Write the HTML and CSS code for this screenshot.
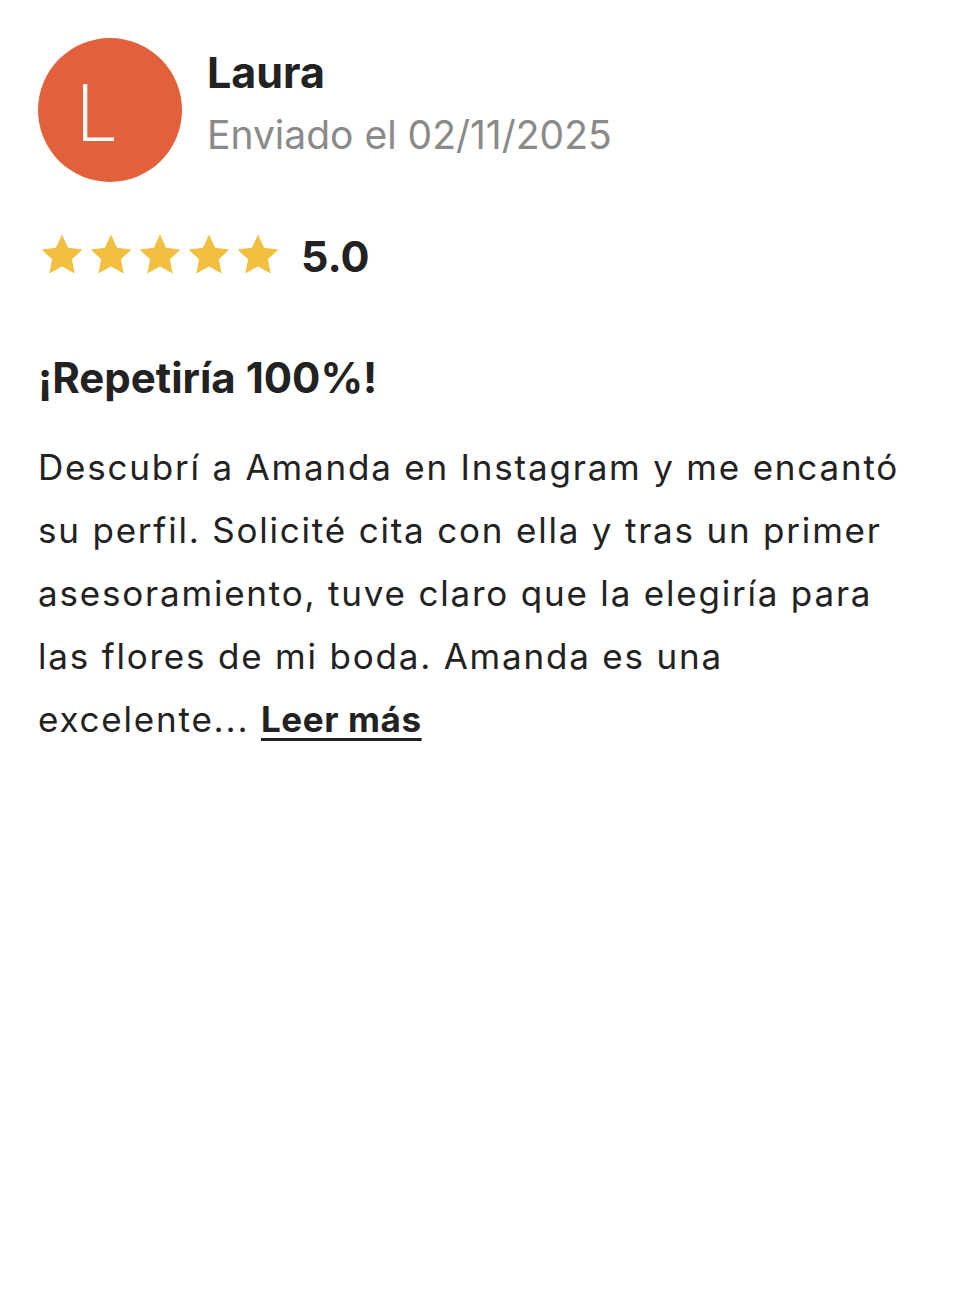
FILE: index.html
```html
<!DOCTYPE html>
<html lang="es">
<head>
<meta charset="utf-8">
<link rel="stylesheet" href="styles.css">
</head>
<body>
<div class="review">
  <div class="header">
    <div class="avatar">L</div>
    <div class="who">
      <div class="name">Laura</div>
      <div class="date">Enviado el 02/11/2025</div>
    </div>
  </div>
  <div class="rating">
    <div class="stars">
      <svg class="star" viewBox="0 0 24 24"><path d="M12 1.8l3.05 6.6 7.2.85-5.33 4.93 1.42 7.12L12 17.7l-6.34 3.6 1.42-7.12L1.75 9.25l7.2-.85z"/></svg>
      <svg class="star" viewBox="0 0 24 24"><path d="M12 1.8l3.05 6.6 7.2.85-5.33 4.93 1.42 7.12L12 17.7l-6.34 3.6 1.42-7.12L1.75 9.25l7.2-.85z"/></svg>
      <svg class="star" viewBox="0 0 24 24"><path d="M12 1.8l3.05 6.6 7.2.85-5.33 4.93 1.42 7.12L12 17.7l-6.34 3.6 1.42-7.12L1.75 9.25l7.2-.85z"/></svg>
      <svg class="star" viewBox="0 0 24 24"><path d="M12 1.8l3.05 6.6 7.2.85-5.33 4.93 1.42 7.12L12 17.7l-6.34 3.6 1.42-7.12L1.75 9.25l7.2-.85z"/></svg>
      <svg class="star" viewBox="0 0 24 24"><path d="M12 1.8l3.05 6.6 7.2.85-5.33 4.93 1.42 7.12L12 17.7l-6.34 3.6 1.42-7.12L1.75 9.25l7.2-.85z"/></svg>
    </div>
    <span class="score">5.0</span>
  </div>
  <h2 class="title">¡Repetiría 100%!</h2>
  <p class="text">Descubrí a Amanda en Instagram y me encantó su perfil. Solicité cita con ella y tras un primer asesoramiento, tuve claro que la elegiría para las flores de mi boda. Amanda es una excelente... <a class="more" href="#">Leer más</a></p>
</div>
</body>
</html>
```
FILE: styles.css
```css
html, body {
  margin: 0;
  padding: 0;
  background: #ffffff;
}
body {
  font-family: Inter, "Liberation Sans", sans-serif;
  color: #222222;
}
.review {
  padding: 38px 35px 0 38px;
}
.header {
  display: flex;
  align-items: center;
  gap: 25px;
}
.avatar {
  width: 144px;
  height: 144px;
  box-sizing: border-box;
  padding-right: 30px;
  border-radius: 50%;
  background: #e2603a;
  color: #ffffff;
  display: flex;
  align-items: center;
  justify-content: center;
  font-family: Lato, Inter, sans-serif;
  font-size: 80px;
  font-weight: 300;
  line-height: 1;
  flex-shrink: 0;
}
.who {
  display: flex;
  flex-direction: column;
  margin-top: -8px;
}
.name {
  font-size: 43px;
  font-weight: 700;
  line-height: 58px;
}
.date {
  font-size: 39px;
  color: #8a8a8a;
  line-height: 68px;
}
.rating {
  display: flex;
  align-items: center;
  gap: 19px;
  margin-top: 46px;
}
.stars {
  display: flex;
  gap: 1px;
}
.star {
  width: 48px;
  height: 48px;
  fill: #f3bf40;
}
.score {
  font-size: 43px;
  font-weight: 700;
  margin-top: 2px;
}
.title {
  font-size: 42px;
  font-weight: 700;
  margin: 68px 0 0 0;
  line-height: 56px;
}
.text {
  font-size: 35px;
  letter-spacing: 1.8px;
  line-height: 63px;
  margin: 30px 0 0 0;
  color: #222222;
}
.more {
  color: #222222;
  font-weight: 700;
  letter-spacing: 0.6px;
  text-decoration: underline;
  text-decoration-thickness: 3px;
  text-underline-offset: 6px;
}
```
